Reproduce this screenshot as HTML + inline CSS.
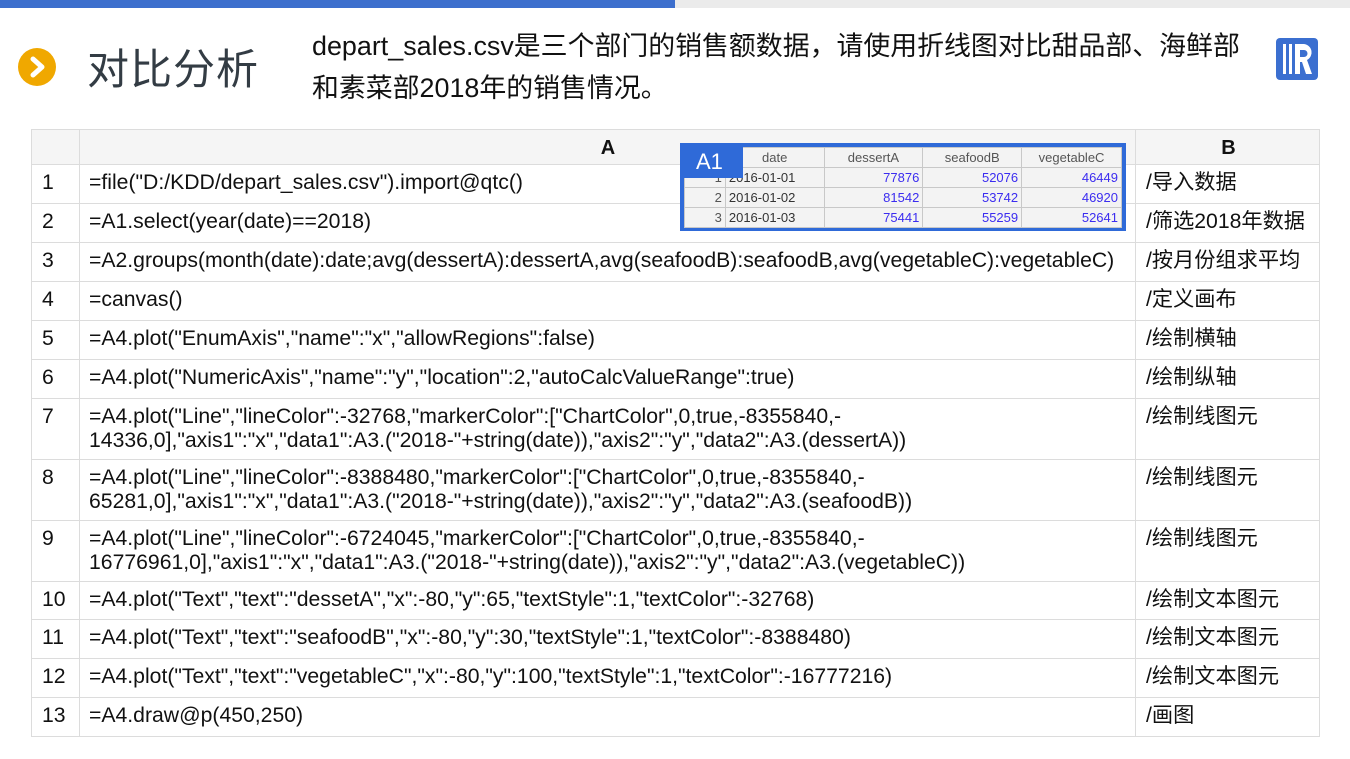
<!DOCTYPE html>
<html><head><meta charset="utf-8"><style>
*{margin:0;padding:0;box-sizing:border-box}
body{width:1350px;height:759px;background:#fff;position:relative;overflow:hidden;font-family:"Liberation Sans","Noto Sans CJK SC",sans-serif;color:#111}
.bar{position:absolute;top:0;left:0;height:8px;width:1350px;background:#ebebeb}
.bar i{position:absolute;left:0;top:0;height:8px;width:675px;background:#3d6fcd}
.ic{position:absolute;left:18px;top:48px;width:38px;height:38px;border-radius:50%;background:#f0a800}
.title{position:absolute;left:87px;top:36px;font-size:42px;color:#333c44;font-family:"Noto Sans CJK SC",sans-serif;letter-spacing:1px}
.desc{position:absolute;left:312px;top:25px;font-size:26.9px;line-height:42px;color:#111;font-family:"Liberation Sans","Noto Sans CJK SC",sans-serif;white-space:nowrap}
table{position:absolute;left:31px;top:129px;border-collapse:collapse;font-size:21.2px}
td{border:1px solid #dcdcdc;vertical-align:top;padding:6px 8px 0 9px;line-height:24px}
td.n{width:48px;padding-left:10px}
td.a{width:1056px}
td.b{width:184px;padding-left:10px;font-family:"Liberation Sans","Noto Sans CJK SC",sans-serif}
tr.h td{background:#f5f5f5;height:35px;text-align:center;font-weight:bold;font-size:20px;padding-top:6px}
.ov{position:absolute;left:680px;top:143px;width:446px;height:88px;border:4px solid #2f6ad8;background:#f3f3f3;font-size:12px;color:#555}
.ov table{position:absolute;left:0;top:0;font-size:13px}
.ov td{border:1px solid #c8c8c8;padding:2px 3px 0;height:20px;line-height:16px}
.lab{position:absolute;left:-4px;top:-4px;width:63px;height:35px;background:#2f6ad8;color:#fff;font-size:22px;line-height:37px;padding-left:16px}
</style></head><body>
<div class="bar"><i></i></div>
<div class="ic"><svg width="38" height="38"><path d="M15 11 L24 19 L15 27" stroke="#fff" stroke-width="5" fill="none" stroke-linecap="round" stroke-linejoin="round"/></svg></div>
<div class="title">对比分析</div>
<div class="desc">depart_sales.csv是三个部门的销售额数据，请使用折线图对比甜品部、海鲜部<br>和素菜部2018年的销售情况。</div>
<svg style="position:absolute;left:1276px;top:38px" width="42" height="42"><rect width="42" height="42" rx="4" fill="#3b6fd0"/><rect x="7" y="6" width="3" height="30" fill="#fff"/><rect x="13" y="6" width="3" height="30" fill="#fff"/><path d="M19 6 H28 a8.5 8.5 0 0 1 3 16 L36 36 H30 L26 24 H24 V36 H19 Z M24 12 V19 H28 a3.5 3.5 0 0 0 0-7 Z" fill="#fff" fill-rule="evenodd"/></svg>
<table>
<tr class="h"><td class="n"></td><td class="a">A</td><td class="b" style="text-align:center">B</td></tr>
<tr style="height:39px"><td class="n">1</td><td class="a">=file("D:/KDD/depart_sales.csv").import@qtc()</td><td class="b">/导入数据</td></tr>
<tr style="height:39px"><td class="n">2</td><td class="a">=A1.select(year(date)==2018)</td><td class="b">/筛选2018年数据</td></tr>
<tr style="height:39px"><td class="n">3</td><td class="a">=A2.groups(month(date):date;avg(dessertA):dessertA,avg(seafoodB):seafoodB,avg(vegetableC):vegetableC)</td><td class="b">/按月份组求平均</td></tr>
<tr style="height:39px"><td class="n">4</td><td class="a">=canvas()</td><td class="b">/定义画布</td></tr>
<tr style="height:39px"><td class="n">5</td><td class="a">=A4.plot("EnumAxis","name":"x","allowRegions":false)</td><td class="b">/绘制横轴</td></tr>
<tr style="height:39px"><td class="n">6</td><td class="a">=A4.plot("NumericAxis","name":"y","location":2,"autoCalcValueRange":true)</td><td class="b">/绘制纵轴</td></tr>
<tr style="height:61px"><td class="n">7</td><td class="a">=A4.plot("Line","lineColor":-32768,"markerColor":["ChartColor",0,true,-8355840,-<br>14336,0],"axis1":"x","data1":A3.("2018-"+string(date)),"axis2":"y","data2":A3.(dessertA))</td><td class="b">/绘制线图元</td></tr>
<tr style="height:61px"><td class="n">8</td><td class="a">=A4.plot("Line","lineColor":-8388480,"markerColor":["ChartColor",0,true,-8355840,-<br>65281,0],"axis1":"x","data1":A3.("2018-"+string(date)),"axis2":"y","data2":A3.(seafoodB))</td><td class="b">/绘制线图元</td></tr>
<tr style="height:61px"><td class="n">9</td><td class="a">=A4.plot("Line","lineColor":-6724045,"markerColor":["ChartColor",0,true,-8355840,-<br>16776961,0],"axis1":"x","data1":A3.("2018-"+string(date)),"axis2":"y","data2":A3.(vegetableC))</td><td class="b">/绘制线图元</td></tr>
<tr style="height:38px"><td class="n">10</td><td class="a">=A4.plot("Text","text":"dessetA","x":-80,"y":65,"textStyle":1,"textColor":-32768)</td><td class="b">/绘制文本图元</td></tr>
<tr style="height:39px"><td class="n">11</td><td class="a">=A4.plot("Text","text":"seafoodB","x":-80,"y":30,"textStyle":1,"textColor":-8388480)</td><td class="b">/绘制文本图元</td></tr>
<tr style="height:39px"><td class="n">12</td><td class="a">=A4.plot("Text","text":"vegetableC","x":-80,"y":100,"textStyle":1,"textColor":-16777216)</td><td class="b">/绘制文本图元</td></tr>
<tr style="height:39px"><td class="n">13</td><td class="a">=A4.draw@p(450,250)</td><td class="b">/画图</td></tr>
</table>
<div class="ov">
<table>
<tr><td style="width:41px"></td><td style="width:99px;text-align:center">date</td><td style="width:99px;text-align:center">dessertA</td><td style="width:99px;text-align:center">seafoodB</td><td style="width:100px;text-align:center">vegetableC</td></tr>
<tr><td style="text-align:right">1</td><td style="color:#333">2016-01-01</td><td style="text-align:right;color:#3b2cf0">77876</td><td style="text-align:right;color:#3b2cf0">52076</td><td style="text-align:right;color:#3b2cf0">46449</td></tr>
<tr><td style="text-align:right">2</td><td style="color:#333">2016-01-02</td><td style="text-align:right;color:#3b2cf0">81542</td><td style="text-align:right;color:#3b2cf0">53742</td><td style="text-align:right;color:#3b2cf0">46920</td></tr>
<tr><td style="text-align:right">3</td><td style="color:#333">2016-01-03</td><td style="text-align:right;color:#3b2cf0">75441</td><td style="text-align:right;color:#3b2cf0">55259</td><td style="text-align:right;color:#3b2cf0">52641</td></tr>
</table>
<div class="lab">A1</div>
</div>
</body></html>
